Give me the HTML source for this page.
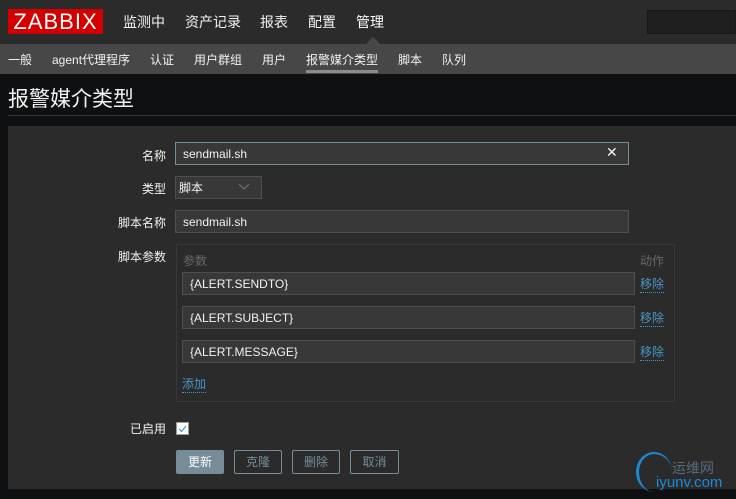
<!DOCTYPE html>
<html><head><meta charset="utf-8"><style>
*{margin:0;padding:0;box-sizing:border-box}
body{width:736px;height:499px;background:#0f1012;font-family:"Liberation Sans","Noto Sans CJK SC",sans-serif;color:#f2f2f2;position:relative;overflow:hidden;font-size:12px}
.a{position:absolute}
.top{left:0;top:0;width:736px;height:44px;background:#2b2b2b}
.logo{left:8px;top:9px;width:95px;height:25px;background:#d40000;color:#fff;font-size:22px;line-height:25px;text-align:center;letter-spacing:1px}
.nav{top:12px;font-size:14px;color:#f2f2f2}
.sub{left:0;top:44px;width:736px;height:30px;background:#474747}
.sn{top:51px;font-size:12px;color:#f2f2f2}
.inp{background:#383838;border:1px solid #4f4f4f;color:#f2f2f2;font-size:12px;padding-left:7px;line-height:22px;height:23px}
.lbl{font-size:12px;color:#f2f2f2;text-align:right;width:70px;left:96px}
.lnk{color:#4796c4;border-bottom:1px dotted #4796c4;font-size:12px}
.btn{top:450px;height:24px;border:1px solid #768d99;color:#768d99;font-size:12px;text-align:center;line-height:22px;border-radius:2px}
</style></head><body>
<div class="a top"></div>
<div class="a logo">ZABBIX</div>
<div class="a nav" style="left:123px">监测中</div>
<div class="a nav" style="left:185px">资产记录</div>
<div class="a nav" style="left:260px">报表</div>
<div class="a nav" style="left:308px">配置</div>
<div class="a nav" style="left:356px;color:#fff">管理</div>
<div class="a" style="left:366px;top:37px;width:0;height:0;border-left:7px solid transparent;border-right:7px solid transparent;border-bottom:7px solid #474747"></div>
<div class="a" style="left:647px;top:10px;width:89px;height:24px;background:#1f1f1f;border:1px solid #191919"></div>
<div class="a sub"></div>
<div class="a sn" style="left:8px">一般</div>
<div class="a sn" style="left:52px">agent代理程序</div>
<div class="a sn" style="left:150px">认证</div>
<div class="a sn" style="left:194px">用户群组</div>
<div class="a sn" style="left:262px">用户</div>
<div class="a sn" style="left:306px">报警媒介类型</div>
<div class="a" style="left:306px;top:70px;width:72px;height:3px;background:#8c8c8c"></div>
<div class="a sn" style="left:398px">脚本</div>
<div class="a sn" style="left:442px">队列</div>
<div class="a" style="left:8px;top:83px;font-size:21px;color:#f2f2f2">报警媒介类型</div>
<div class="a" style="left:8px;top:115px;width:728px;height:1px;background:#383838"></div>
<div class="a" style="left:8px;top:126px;width:728px;height:363px;background:#2b2b2b"></div>

<div class="a lbl" style="top:147px">名称</div>
<div class="a inp" style="left:175px;top:142px;width:454px;border-color:#768d99">sendmail.sh</div>
<div class="a" style="left:606px;top:144px;font-size:14px;color:#f2f2f2">✕</div>
<div class="a lbl" style="top:180px">类型</div>
<div class="a inp" style="left:175px;top:176px;width:87px;padding-left:3px">脚本</div>
<svg class="a" style="left:238px;top:183px" width="12" height="8"><path d="M1 1l5 5 5-5" stroke="#777" fill="none"/></svg>
<div class="a lbl" style="top:214px">脚本名称</div>
<div class="a inp" style="left:175px;top:210px;width:454px">sendmail.sh</div>
<div class="a lbl" style="top:248px">脚本参数</div>
<div class="a" style="left:176px;top:244px;width:499px;height:158px;border:1px solid #383838"></div>
<div class="a" style="left:183px;top:252px;color:#686868">参数</div>
<div class="a" style="left:640px;top:252px;color:#686868">动作</div>
<div class="a inp" style="left:182px;top:272px;width:453px">{ALERT.SENDTO}</div>
<div class="a lnk" style="left:640px;top:275px">移除</div>
<div class="a inp" style="left:182px;top:306px;width:453px">{ALERT.SUBJECT}</div>
<div class="a lnk" style="left:640px;top:309px">移除</div>
<div class="a inp" style="left:182px;top:340px;width:453px">{ALERT.MESSAGE}</div>
<div class="a lnk" style="left:640px;top:343px">移除</div>
<div class="a lnk" style="left:182px;top:375px">添加</div>

<div class="a lbl" style="top:420px">已启用</div>
<div class="a" style="left:176px;top:422px;width:13px;height:13px;background:#fff;border:1px solid #999"></div>
<svg class="a" style="left:177px;top:423px" width="11" height="11"><path d="M2 6l2.5 2.5L9 3" stroke="#4796c4" fill="none" stroke-width="1.2"/></svg>
<div class="a btn" style="left:176px;width:48px;background:#768d99;color:#fff">更新</div>
<div class="a btn" style="left:234px;width:48px">克隆</div>
<div class="a btn" style="left:292px;width:48px">删除</div>
<div class="a btn" style="left:350px;width:49px">取消</div>
<div class="a" style="left:672px;top:458px;font-size:14px;color:#5a6a78">运维网</div>
<div class="a" style="left:656px;top:474px;font-size:15px;color:#1a8ad6">iyunv.com</div>
<div class="a" style="left:636px;top:452px;width:36px;height:40px;border-radius:50%;border-left:3px solid #1a8ad6;border-top:2px solid #1a8ad6"></div>
</body></html>
